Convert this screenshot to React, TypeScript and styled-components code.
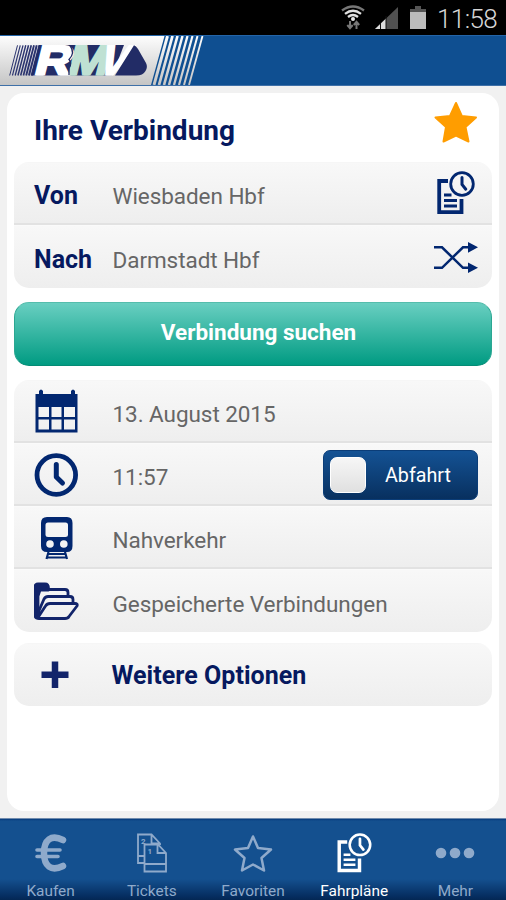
import React from "react";
import styled, { createGlobalStyle } from "styled-components";

const navy = "#06195f";
const iconNavy = "#022770";

const GlobalStyle = createGlobalStyle`
  * { box-sizing: border-box; }
  body { margin: 0; background: #f1f1f1; font-family: Roboto, "Liberation Sans", sans-serif; }
  svg { display: block; }
`;

const Screen = styled.div`
  width: 506px;
  height: 900px;
  display: flex;
  flex-direction: column;
  background: #f1f1f1;
  overflow: hidden;
`;

const StatusBar = styled.div`
  height: 35px;
  flex: none;
  background: #000;
  display: flex;
  justify-content: flex-end;
  align-items: center;
  padding-right: 9px;
`;

const StatusTime = styled.span`
  color: #d6d6d6;
  font-size: 26px;
  font-weight: 300;
  line-height: 34px;
  height: 32px;
  margin-left: 11px;
  letter-spacing: -0.6px;
  width: 60px;
  white-space: nowrap;
`;

const Header = styled.header`
  height: 51px;
  flex: none;
  background: #0f4f91;
  border-top: 1px solid #2465a8;
  border-bottom: 1px solid #3f70a8;
`;

const Main = styled.main`
  flex: 1;
  padding: 7px 7px 7px;
  display: flex;
`;

const Card = styled.section`
  flex: 1;
  background: #fff;
  border-radius: 17px;
  padding: 0 7px;
`;

const TitleRow = styled.div`
  height: 69px;
  padding: 6px 13px 0 20px;
  display: flex;
  align-items: center;
  justify-content: space-between;
`;

const Title = styled.h1`
  margin: 0;
  color: ${navy};
  font-size: 28px;
  font-weight: 700;
  line-height: 34px;
`;

const StarBox = styled.div`
  margin-top: -15px;
`;

const Group = styled.div<{ $gap: number }>`
  border-radius: 15px;
  overflow: hidden;
  margin-bottom: ${(p) => p.$gap}px;
`;

const Row = styled.div`
  height: 63px;
  display: flex;
  align-items: center;
  padding: 1px 13px 0 20px;
  background: linear-gradient(#f8f8f8, #eeeeee);
  border-top: 1px solid #fafafa;
  border-bottom: 2px solid #e2e2e2;
  &:first-child { border-top-color: #f6f6f6; }
  &:last-child { border-bottom: 0; }
`;

const Lead = styled.div`
  width: 78.5px;
  flex: none;
  color: ${navy};
  font-size: 25px;
  font-weight: 700;
  line-height: 32px;
  padding-top: 4px;
`;

const IconLead = styled.div`
  width: 78.5px;
  flex: none;
`;

const Value = styled.div`
  flex: 1;
  color: #666;
  font-size: 22.5px;
  letter-spacing: -0.06px;
  line-height: 30px;
  padding-top: 4px;
  white-space: nowrap;
`;

const OptionsLabel = styled(Value)`
  color: ${navy};
  font-size: 25px;
  font-weight: 700;
  letter-spacing: 0.04px;
  margin-left: -1px;
  padding-top: 1px;
`;

const SearchButton = styled.button`
  display: block;
  width: 100%;
  height: 64px;
  margin: 0 0 14px;
  padding: 0 0 4px 11px;
  border: 1px solid #2ba792;
  border-top-color: #55bdac;
  border-bottom-color: #048b75;
  border-radius: 15px;
  background: linear-gradient(#69cfc1, #009b82);
  color: #fff;
  font: 700 22.5px Roboto, sans-serif;
`;

const Toggle = styled.div`
  width: 155px;
  height: 50px;
  margin-right: 1px;
  border-radius: 7px;
  border: 1px solid #0b3d78;
  background: linear-gradient(#145294, #08305f);
  display: flex;
  align-items: center;
  padding-left: 6px;
  color: #fff;
  font-size: 19.7px;
  line-height: 24px;
`;

const Knob = styled.span`
  width: 36px;
  height: 36px;
  border-radius: 7px;
  background: linear-gradient(#f6f6f6, #e0e0e0);
  border: 1px solid #fff;
  margin-right: 19px;
`;

const ToggleText = styled.span`
  padding-top: 2px;
`;

const TabBar = styled.nav`
  height: 82px;
  flex: none;
  display: grid;
  grid-template-columns: repeat(5, 1fr);
  border-top: 1px solid #708bad;
  background: linear-gradient(#063b7c 0, #14508f 2px, #14508f 60px, #052c5e 78px, #042753 100%);
`;

const Tab = styled.div<{ $active?: boolean }>`
  display: flex;
  flex-direction: column;
  align-items: center;
  color: ${(p) => (p.$active ? "#fff" : "#8faacb")};
`;

const TabIcon = styled.div`
  height: 63px;
  display: flex;
  align-items: center;
  padding-top: 5px;
`;

const TabLabel = styled.span`
  font-size: 15.4px;
  line-height: 19px;
  white-space: nowrap;
`;

const WifiIcon = () => (
  <svg width="24" height="26" viewBox="0 0 24 26" fill="none" strokeWidth="2.3">
    <path d="M1 6.5Q12-1.5 23 6.5" stroke="#777" />
    <path d="M4 9.8Q12 3.8 20 9.8M7 13Q12 9 17 13" stroke="#e0e0e0" />
    <circle cx="12" cy="15" r="2" fill="#e8e8e8" />
    <path d="M9 17v7M6.3 21 9 24.2 11.7 21M15.500 25v-7M12.800 21l2.700-3.200L18.200 21" stroke="#777" strokeWidth="2" />
  </svg>
);

const SignalIcon = () => (
  <svg width="23" height="22" viewBox="0 0 23 22">
    <path d="M0 22 23 0V22Z" fill="#505050" />
    <path d="M0 22 11 11.5V22Z" fill="#ddd" />
    <path d="M5.5 16v6M11 9v13" stroke="#111" />
  </svg>
);

const BatteryIcon = () => (
  <svg width="16" height="23" viewBox="0 0 16 23">
    <path d="M5 0H11V3H16V7H0V3H5Z" fill="#555" />
    <path d="M0 6H16V23H0Z" fill="#bcbcbc" />
  </svg>
);

const StatusIcons = styled.div`
  display: flex;
  align-items: flex-end;
  height: 26px;
  margin-top: -1px;
  & > svg:nth-child(1) { position: relative; left: 2px; }
  & > svg:nth-child(2) { margin: 0 12px 1px 12px; }
  & > svg:nth-child(3) { margin-bottom: 1px; }
`;

const Logo = () => (
  <svg width="210" height="49" viewBox="0 36 210 49">
    <defs>
      <linearGradient id="silver" gradientUnits="userSpaceOnUse" x1="0" y1="36" x2="0" y2="85">
        <stop offset="0" stopColor="#fdfdfd" />
        <stop offset="1" stopColor="#c5c5c5" />
      </linearGradient>
      <clipPath id="badge">
        <path d="M17 45H136Q147 61 146.500 67Q146 75 136 75.500H9Z" />
      </clipPath>
    </defs>
    <path d="M0 36H164.500L151 85H0Z" fill="url(#silver)" />
    {[0, 1, 2, 3, 4, 5, 6, 7].map((i) => (
      <path key={i} d={`M${167.500 + i * 5} 36L${154 + i * 5} 85`} stroke="url(#silver)" strokeWidth={2.9 - i * 0.15} />
    ))}
    {[0, 1, 2, 3, 4, 5, 6, 7, 8].map((i) => (
      <path key={i} d={`M${17.500 + i * 2.750} 45.300L${9.700 + i * 2.750} 75.500`} stroke="#2b346f" strokeWidth={1 + i * 0.14} />
    ))}
    <g clipPath="url(#badge)">
      <path d="M39 45H124L112 76H31Z" fill="#222c66" />
      <g fontFamily="Liberation Sans, sans-serif" fontWeight="700" fontSize="43.500" strokeWidth="2.500">
        <text transform="translate(66 75.500) skewX(-14)" fill="#bfe1d3" stroke="#bfe1d3" textLength="40" lengthAdjust="spacingAndGlyphs">M</text>
        <text transform="translate(32.500 75.500) skewX(-14)" fill="#fff" stroke="#fff" textLength="37" lengthAdjust="spacingAndGlyphs">R</text>
        <text transform="translate(95 75.500) skewX(-23)" fill="#fff" stroke="#fff" strokeWidth="2" textLength="28" lengthAdjust="spacingAndGlyphs">V</text>
      </g>
    </g>
    <path d="M70 45.500Q75.500 53 69 59.500Q72.500 63 69 68V75" stroke="#222c66" strokeWidth="1.300" fill="none" />
    <path d="M134 45.300Q136 46 138 49L146 63Q148 67 145.500 71Q143 75.500 136 75.500H115Z" fill="#222c66" />
  </svg>
);

const StarIcon = () => (
  <svg width="46" height="44" viewBox="0 0 46 44">
    <path d="M23 2 28.800 15 43 16.500 32.500 26 35.500 40.500 23 34.500 10.500 40.500 13 26 2.500 16.500 17 15Z" fill="#ff9d00" stroke="#ff9d00" strokeWidth="2" strokeLinejoin="round" />
  </svg>
);

const TimetableIcon = ({ tab }: { tab?: boolean }) => (
  <svg width={tab ? 35 : 38} height={tab ? 40 : 44} viewBox="0 0 38 44" fill="none" stroke="currentColor">
    <path d="M11 10H2.200V41.200H24.500V28" strokeWidth="3.800" />
    <path d="M7 24H14.500M7 29.500H20M7 35H20" strokeWidth="2.800" />
    <circle cx="25" cy="13" r="11.300" strokeWidth="2.800" />
    <path d="M25 6.500V13.500L28.800 18.200" strokeWidth="3" strokeLinecap="round" />
  </svg>
);

const ShuffleIcon = () => (
  <svg width="45" height="32" viewBox="0 0 45 32" fill="none" stroke={iconNavy} strokeWidth="2.500">
    <path d="M0 6.300H8L29 26.800H37M0 26.800H8L29 6.300H37" />
    <path d="M34 1 44 6.300 34 11.800ZM34 21.500 44 26.800 34 32Z" fill={iconNavy} stroke="none" />
  </svg>
);

const CalendarIcon = () => (
  <svg width="44" height="46" viewBox="0 0 44 46" fill={iconNavy}>
    <path fillRule="evenodd" d="M1.500 5H5V2Q7-1 9 2V5H37V2Q39-1 41 2V5H43.500V43.500H1.500ZM4.500 18V28H15V18ZM17.500 18V28H27.500V18ZM30 18V28H41V18ZM4.500 30.500V40.500H15V30.500ZM17.500 30.500V40.500H27.500V30.500ZM30 30.500V40.500H41V30.500Z" />
  </svg>
);

const ClockIcon = () => (
  <svg width="44" height="44" viewBox="0 0 44 44" fill="none" stroke={iconNavy}>
    <circle cx="22.300" cy="22" r="19.300" strokeWidth="4.800" />
    <path d="M22.300 11.500V24L28.500 30" strokeWidth="5" strokeLinecap="round" strokeLinejoin="round" />
  </svg>
);

const TrainIcon = () => (
  <svg width="45" height="44" viewBox="0 0 45 44" fill={iconNavy}>
    <path fillRule="evenodd" d="M13 1H33Q38.500 1 38.500 7V30Q38.500 36 33 36H13Q7 36 7 30V7Q7 1 13 1ZM14 6.500Q11.500 6.500 11.500 9V19Q11.500 21 14 21H31.500Q34 21 34 19V9Q34 6.500 31.500 6.500Z" />
    <circle cx="16" cy="28" r="3.800" fill="#f3f3f3" />
    <circle cx="29.800" cy="28" r="3.800" fill="#f3f3f3" />
    <path d="M14.500 36 12.500 43M31 36 33 43M14 38H31.500M13 41.500H32.500" stroke={iconNavy} strokeWidth="2.200" />
  </svg>
);

const FolderIcon = () => (
  <svg width="46" height="40" viewBox="1 0 46 40" fill="none" stroke="#12246a" strokeWidth="2.800" strokeLinejoin="round">
    <path d="M2 34V5Q2 2 5 2H12Q15.500 2 15.500 6.500V8H7L5 14V34Z" fill="#12246a" />
    <path d="M2 33Q2 36.500 6 36.500H32Q35 36.500 36 34.500L44 24Q45 21.500 42 21.500H17Q14 21.500 12.500 24L5 35.500M5 31 11 17Q12.500 14.500 15 14.500H37Q40 14.500 40 17.500V21.500M15 7.500H32Q35 7.500 35 10.500V14.500" />
  </svg>
);

const PlusIcon = () => (
  <svg width="45" height="30" viewBox="0 0 45 30">
    <path d="M21 .5V27M7.500 13.800H34.500" stroke="#12246a" strokeWidth="6.500" />
  </svg>
);

const EuroIcon = () => (
  <svg width="32" height="38" viewBox="0 0 32 38" fill="none" stroke="currentColor" strokeLinecap="round">
    <path d="M28 6C16 0 9 6 9 19S16 38 28 32" strokeWidth="6.500" />
    <path d="M2 16H25M2 22.500H23" strokeWidth="3.600" />
  </svg>
);

const TicketNumber = styled.text`
  font: 700 8px Roboto, sans-serif;
  fill: currentColor;
  stroke: none;
`;

const TicketsIcon = () => (
  <svg width="32" height="40" viewBox="0 0 32 40" fill="none" stroke="currentColor" strokeWidth="1.800">
    <path d="M8 30H2V1.500H15.500L24 10.500V12M15.500 1.500V10.500H24M2 23H8" />
    <path d="M8.500 11.500H22L30 20V38.500H8.500ZM21.500 11.500V20H30M8.500 31H30" />
    <TicketNumber x="5" y="10.500">2</TicketNumber>
    <TicketNumber x="11.500" y="20.500">1</TicketNumber>
  </svg>
);

const StarOutlineIcon = () => (
  <svg width="42" height="39" viewBox="0 0 42 39">
    <path d="M21 2.500 26 14 39 15.500 29.500 24 32 36.500 21 30.500 10 36.500 12.500 24 3 15.500 16 14Z" fill="none" stroke="currentColor" strokeWidth="2.500" strokeLinejoin="round" />
  </svg>
);

const DotsIcon = () => (
  <svg width="40" height="12" viewBox="0 0 40 12" fill="currentColor">
    <circle cx="6" cy="6" r="5.300" />
    <circle cx="20" cy="6" r="5.300" />
    <circle cx="34" cy="6" r="5.300" />
  </svg>
);

const ActionIcon = styled.div`
  color: ${iconNavy};
  width: 46px;
  flex: none;
  display: flex;
  justify-content: center;
  margin-top: -2px;
`;

const tabs = [
  { label: "Kaufen", icon: <EuroIcon /> },
  { label: "Tickets", icon: <TicketsIcon /> },
  { label: "Favoriten", icon: <StarOutlineIcon /> },
  { label: "Fahrpläne", icon: <TimetableIcon tab />, active: true },
  { label: "Mehr", icon: <DotsIcon /> },
];

const details = [
  { value: "13. August 2015", icon: <CalendarIcon /> },
  { value: "11:57", icon: <ClockIcon />, toggle: "Abfahrt" },
  { value: "Nahverkehr", icon: <TrainIcon /> },
  { value: "Gespeicherte Verbindungen", icon: <FolderIcon /> },
];

export default function App() {
  return (
    <Screen>
      <GlobalStyle />
      <StatusBar>
        <StatusIcons>
          <WifiIcon />
          <SignalIcon />
          <BatteryIcon />
        </StatusIcons>
        <StatusTime>11:58</StatusTime>
      </StatusBar>
      <Header>
        <Logo />
      </Header>
      <Main>
        <Card>
          <TitleRow>
            <Title>Ihre Verbindung</Title>
            <StarBox><StarIcon /></StarBox>
          </TitleRow>
          <Group $gap={14}>
            <Row>
              <Lead>Von</Lead>
              <Value>Wiesbaden Hbf</Value>
              <ActionIcon><TimetableIcon /></ActionIcon>
            </Row>
            <Row>
              <Lead>Nach</Lead>
              <Value>Darmstadt Hbf</Value>
              <ActionIcon><ShuffleIcon /></ActionIcon>
            </Row>
          </Group>
          <SearchButton>Verbindung suchen</SearchButton>
          <Group $gap={11}>
            {details.map((d) => (
              <Row key={d.value}>
                <IconLead>{d.icon}</IconLead>
                <Value>{d.value}</Value>
                {d.toggle && (
                  <Toggle>
                    <Knob />
                    <ToggleText>{d.toggle}</ToggleText>
                  </Toggle>
                )}
              </Row>
            ))}
          </Group>
          <Group $gap={0}>
            <Row>
              <IconLead><PlusIcon /></IconLead>
              <OptionsLabel>Weitere Optionen</OptionsLabel>
            </Row>
          </Group>
        </Card>
      </Main>
      <TabBar>
        {tabs.map((t) => (
          <Tab key={t.label} $active={t.active}>
            <TabIcon>{t.icon}</TabIcon>
            <TabLabel>{t.label}</TabLabel>
          </Tab>
        ))}
      </TabBar>
    </Screen>
  );
}
